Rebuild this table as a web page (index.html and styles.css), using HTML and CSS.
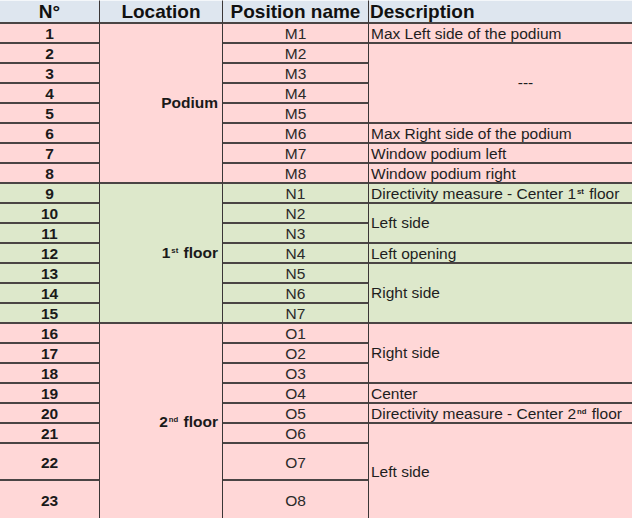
FILE: index.html
```html
<!DOCTYPE html>
<html>
<head>
<meta charset="utf-8">
<link rel="stylesheet" href="styles.css">
</head>
<body>
<table class="grid">
  <colgroup>
    <col class="c-num"><col class="c-loc"><col class="c-pos"><col class="c-desc">
  </colgroup>
  <thead>
    <tr class="head">
      <th class="h-num">N°</th>
      <th>Location</th>
      <th>Position name</th>
      <th class="h-desc">Description</th>
    </tr>
  </thead>
  <tbody>
    <tr class="pink"><td class="num">1</td><td class="loc" rowspan="8">Podium</td><td class="pos">M1</td><td class="desc">Max Left side of the podium</td></tr>
    <tr class="pink"><td class="num">2</td><td class="pos">M2</td><td class="desc span mid" rowspan="4">---</td></tr>
    <tr class="pink"><td class="num">3</td><td class="pos">M3</td></tr>
    <tr class="pink"><td class="num">4</td><td class="pos">M4</td></tr>
    <tr class="pink"><td class="num">5</td><td class="pos">M5</td></tr>
    <tr class="pink"><td class="num">6</td><td class="pos">M6</td><td class="desc">Max Right side of the podium</td></tr>
    <tr class="pink"><td class="num">7</td><td class="pos">M7</td><td class="desc">Window podium left</td></tr>
    <tr class="pink"><td class="num">8</td><td class="pos">M8</td><td class="desc">Window podium right</td></tr>

    <tr class="green"><td class="num">9</td><td class="loc" rowspan="7">1<sup>st</sup> floor</td><td class="pos">N1</td><td class="desc">Directivity measure - Center 1<sup>st</sup> floor</td></tr>
    <tr class="green"><td class="num">10</td><td class="pos">N2</td><td class="desc span" rowspan="2">Left side</td></tr>
    <tr class="green"><td class="num">11</td><td class="pos">N3</td></tr>
    <tr class="green"><td class="num">12</td><td class="pos">N4</td><td class="desc">Left opening</td></tr>
    <tr class="green"><td class="num">13</td><td class="pos">N5</td><td class="desc span" rowspan="3">Right side</td></tr>
    <tr class="green"><td class="num">14</td><td class="pos">N6</td></tr>
    <tr class="green"><td class="num">15</td><td class="pos">N7</td></tr>

    <tr class="pink"><td class="num">16</td><td class="loc" rowspan="8">2<sup>nd</sup> floor</td><td class="pos">O1</td><td class="desc span" rowspan="3">Right side</td></tr>
    <tr class="pink"><td class="num">17</td><td class="pos">O2</td></tr>
    <tr class="pink"><td class="num">18</td><td class="pos">O3</td></tr>
    <tr class="pink"><td class="num">19</td><td class="pos">O4</td><td class="desc">Center</td></tr>
    <tr class="pink"><td class="num">20</td><td class="pos">O5</td><td class="desc">Directivity measure - Center 2<sup>nd</sup> floor</td></tr>
    <tr class="pink"><td class="num">21</td><td class="pos">O6</td><td class="desc span" rowspan="3">Left side</td></tr>
    <tr class="pink tall"><td class="num">22</td><td class="pos">O7</td></tr>
    <tr class="pink tall2"><td class="num">23</td><td class="pos">O8</td></tr>
  </tbody>
</table>
</body>
</html>
```

FILE: styles.css
```css
html, body {
  margin: 0;
  padding: 0;
  overflow: hidden;
  background: #ffffff;
}

.grid {
  border-collapse: separate;
  border-spacing: 0;
  table-layout: fixed;
  width: 632px;
  font-family: "Liberation Sans", Arial, sans-serif;
  color: #1a1a1a;
}

.c-num { width: 100px; }
.c-loc { width: 123px; }
.c-pos { width: 146px; }
.c-desc { width: 263px; }

.grid th,
.grid td {
  padding: 2px 0 0 0;
  border-right: 1px solid #3a3636;
  border-bottom: 2px solid #4a4444;
  line-height: 16px;
  white-space: nowrap;
  overflow: hidden;
}

.grid .h-desc,
.grid .desc {
  border-right: none;
}

.head {
  height: 24px;
  background: #dee6ef;
}

.head th {
  font-size: 19px;
  font-weight: bold;
  text-align: center;
  color: #111;
  border-top: 1px solid #f4f7fa;
  padding-top: 0;
  line-height: 20px;
}

.head .h-desc {
  text-align: left;
  padding-left: 1px;
}

tbody tr { height: 20px; }
tbody tr.tall { height: 37px; }
tbody tr.tall2 { height: 40px; }

.pink td { background: #ffd7d7; }
.green td { background: #dde8cb; }

.num {
  font-size: 15.5px;
  font-weight: bold;
  text-align: center;
  color: #1a1a1a;
}

.grid .loc {
  font-size: 15.5px;
  font-weight: bold;
  text-align: right;
  padding-top: 0;
  padding-right: 4px;
  vertical-align: middle;
  color: #1a1a1a;
}

.pos {
  font-size: 15.5px;
  text-align: center;
  color: #2a2a2a;
}

.grid .desc {
  font-size: 15.5px;
  text-align: left;
  padding-left: 2px;
  vertical-align: middle;
  color: #1e1e1e;
}

.grid .desc.span {
  padding-top: 0;
}

.grid .desc.mid {
  text-align: center;
  padding-left: 50px;
}

sup {
  font-size: 0.5em;
  line-height: 0;
  vertical-align: 0.6em;
  font-weight: bold;
  padding: 0 1px;
}
```
